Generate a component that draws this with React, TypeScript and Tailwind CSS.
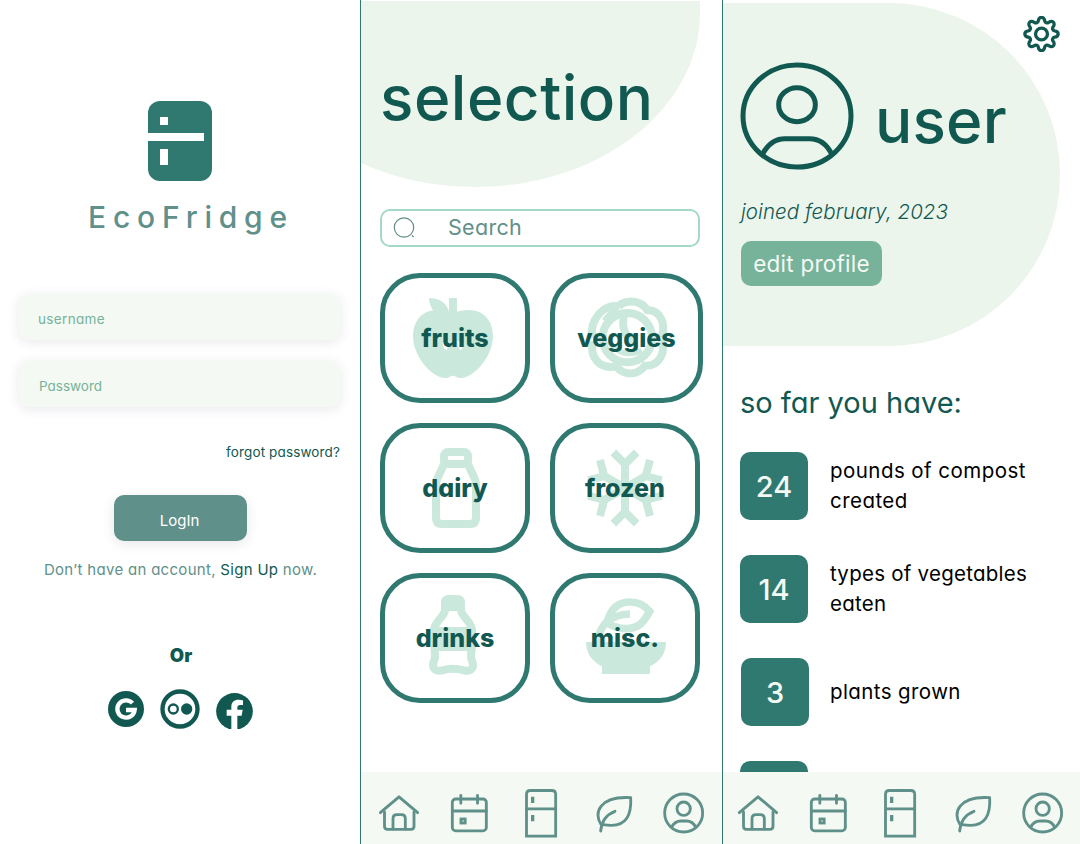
import type { ReactNode } from "react";

/* ---------- Bottom navigation ---------- */

function NavIcon({ box, className, children }: { box: string; className: string; children: ReactNode }) {
  return (
    <svg
      viewBox={box}
      className={`h-[72px] shrink-0 ${className}`}
      fill="none"
      stroke="#5f9089"
      strokeWidth={8.5}
      strokeLinecap="round"
      strokeLinejoin="round"
    >
      {children}
    </svg>
  );
}

function NavBar({ shifted = false }: { shifted?: boolean }) {
  return (
    <nav className="h-[72px] shrink-0 overflow-hidden bg-[#f4f9f3]">
      <div className={shifted ? "-ml-[3px] flex" : "flex"}>
        <NavIcon box="3 21 222 216" className="w-[74px]">
          <path d="M61 143 L117 95.500 L173 143" />
          <path d="M73.500 141 V184 Q73.500 193 82.500 193 H153 Q162 193 162 184 V141" />
          <path d="M99 192 V161 Q99 149 111 149 H124 Q136 149 136 161 V192" />
        </NavIcon>
        <NavIcon box="225 21 213 216" className="w-[71px]">
          <rect x="277" y="102" width="102" height="95.500" rx="10" />
          <path d="M277 138 H379 M302.500 91 V115 M352.500 91 V115" />
          <rect x="303" y="162" width="12.500" height="12" strokeLinejoin="miter" />
        </NavIcon>
        <NavIcon box="438 21 213 216" className="w-[71px]">
          <path d="M499.500 213.500 V88 Q499.500 76.500 511.500 76.500 H575 Q587 76.500 587 88 V213.500 Z" strokeLinejoin="miter" />
          <path d="M499.500 131.500 H587" />
          <path d="M518 95 V114 M518 150 V169" strokeWidth={10} strokeLinecap="butt" />
        </NavIcon>
        <NavIcon box="651 21 213 216" className="w-[71px]">
          <path d="M812 98 C815 150 798 181 755 181 C740 181 731 179 723 178 C700 145 718 92 812 98 Z" />
          <path d="M722 198 C725 168 740 148 765 139" />
        </NavIcon>
        <NavIcon box="864 21 216 216" className="w-[72px]">
          <circle cx="971" cy="144" r="57" />
          <circle cx="971" cy="131" r="20" />
          <path d="M935 187 C941 174 953 168 963 168 H980 C990 168 1001 174 1007 187" />
        </NavIcon>
      </div>
    </nav>
  );
}

/* ---------- Login screen ---------- */

function LoginScreen() {
  return (
    <section className="flex h-[844px] w-[360px] shrink-0 flex-col bg-white">
      <svg viewBox="0 0 64 80" className="mt-[101px] ml-[148px] h-20 w-16">
        <rect width="64" height="80" rx="12" fill="#2f7970" />
        <path d="M12 16h8v8h-8zM0 32h56v8H0zM12 48h8v16h-8z" fill="#fff" />
      </svg>
      <h1 className="mt-4 ml-[88px] h-10 text-[30px] leading-10 font-medium tracking-[6.8px] text-[#5f9089]">EcoFridge</h1>

      <form className="mt-[57px] flex flex-col">
        <div className="ml-[19px] h-[46px] w-[321px] rounded-[10px] bg-[#f4f9f3] pt-[5px] pl-[19px] text-[13.5px] leading-[41px] tracking-[0.35px] text-[#76b39a] shadow-[0_2px_12px_rgba(80,60,90,0.12)]">
          username
        </div>
        <div className="mt-[21px] ml-[19px] h-[46px] w-[321px] rounded-[10px] bg-[#f4f9f3] pt-[5px] pl-5 text-[13.5px] leading-[41px] text-[#76b39a] shadow-[0_2px_12px_rgba(80,60,90,0.12)]">
          Password
        </div>
        <a className="mt-[35px] mr-5 h-5 self-end text-[13.5px] leading-5 tracking-[0.13px] text-[#115851]">forgot password?</a>
        <button
          type="button"
          className="mt-[33px] ml-[114px] h-[46px] w-[133px] rounded-[10px] bg-[#5f9089] pt-[5px] pr-[2px] text-[15px] leading-[41px] text-white shadow-[0_3px_12px_rgba(80,60,90,0.13)]"
        >
          LogIn
        </button>
      </form>

      <p className="mt-[19px] h-5 pl-px text-center text-[15px] leading-5 tracking-[0.3px] whitespace-nowrap text-[#5f9089]">
        Don’t have an account, <span className="text-[#115851]">Sign Up</span> now.
      </p>
      <p className="mt-[65px] h-5 pl-[2px] text-center text-[18.5px] leading-5 font-black text-[#115851]">Or</p>

      <div className="mt-[24px] flex">
        <svg viewBox="54 627 108 120" className="ml-[108px] h-10 w-9">
          <circle cx="108" cy="687" r="54" fill="#115851" />
          <path d="M127.500 669.500 A26 26 0 1 0 134 690 H108" fill="none" stroke="#fff" strokeWidth="13" />
        </svg>
        <svg viewBox="210 627 120 120" className="ml-4 h-10 w-10">
          <circle cx="270" cy="687" r="52.500" fill="none" stroke="#115851" strokeWidth="13" />
          <circle cx="250" cy="687" r="13.500" fill="none" stroke="#115851" strokeWidth="7" />
          <circle cx="290" cy="687" r="17" fill="#115851" />
        </svg>
        <svg viewBox="378 627 111 120" className="ml-4 h-10 w-[37px]">
          <circle cx="433.500" cy="694" r="55" fill="#115851" />
          <path
            d="M424 750 V707 H410 V689 H424 V680 C424 666 433 659 445 659 C451 659 455 660 459 661 V675 H451 C444 675 442 679 442 684 V689 H458 L455 707 H442 V750 Z"
            fill="#fff"
          />
        </svg>
      </div>
    </section>
  );
}

/* ---------- Selection screen ---------- */

const tileArt: Record<string, ReactNode> = {
  fruits: (
    <>
      <path
        d="M219 121 C235 113 250 111 267 111 C312 111 339 145 339 190 C339 250 282 315 243 315 C230 315 226 308 219 308 C212 308 208 315 195 315 C156 315 99 250 99 190 C99 145 126 111 171 111 C188 111 203 113 219 121 Z"
        fill="#cbe8dc"
      />
      <path d="M207 75 H231 V125 H207 Z" fill="#cbe8dc" />
      <path d="M147 75 C180 75 203 92 207 118 L164 118 C152 104 148 92 147 75 Z" fill="#cbe8dc" />
      <path d="M188 208 Q189 227 199 232 Q206 222 205 204 Z M233 204 Q234 224 242 232 Q252 222 252 208 Z" fill="#fff" />
    </>
  ),
  veggies: (
    <g fill="none" stroke="#cbe8dc" strokeWidth="24">
      <circle cx="232" cy="194" r="74" />
      <path d="M208 100 C160 92 119 140 126 194" />
      <path d="M204 101 C225 80 270 78 292 111 C330 112 350 150 334 194" />
      <path d="M128 205 C118 255 150 290 198 280 C225 310 262 308 285 278 C328 280 352 235 330 202" />
      <path d="M222 125 C214 165 225 195 258 208" />
      <path d="M176 204 C200 245 245 250 275 232" strokeWidth="16" />
      <path d="M205 110 C190 118 176 130 166 145" />
    </g>
  ),
  dairy: (
    <g fill="none" stroke="#cbe8dc" strokeWidth="24">
      <rect x="192" y="87" width="72" height="36" rx="12" />
      <path d="M194 120 L174 162 Q168 174 168 186 V285 Q168 303 186 303 H270 Q288 303 288 285 V186 Q288 174 282 162 L262 120" />
    </g>
  ),
  frozen: (
    <g fill="none" stroke="#cbe8dc" strokeWidth="24" transform="translate(225 195)">
      {[0, 60, 120, 180, 240, 300].map((angle) => (
        <path key={angle} d="M0 0 V-72 M-35 -107 L0 -72 L35 -107" transform={`rotate(${angle})`} />
      ))}
    </g>
  ),
  drinks: (
    <>
      <path d="M183 114 V90 Q183 66 207 66 H231 Q255 66 255 90 V114 Z" fill="#cbe8dc" />
      <path d="M155 162 H287 V234 H155 Z" fill="#cbe8dc" />
      <path
        d="M195 112 C190 136 162 146 162 174 L165 252 C165 260 159 266 159 276 C159 292 174 295 186 292 C208 286 230 286 252 292 C264 295 279 292 279 276 C279 266 273 260 273 252 L276 174 C276 146 248 136 243 112"
        fill="none"
        stroke="#cbe8dc"
        strokeWidth="24"
      />
    </>
  ),
  misc: (
    <>
      <path d="M108 207 H348 C348 242 329 267 300 280 V303 H156 V280 C128 267 108 242 108 207 Z" fill="#cbe8dc" />
      <g fill="none" stroke="#cbe8dc" strokeWidth="23">
        <path d="M172 146 C184 100 212 87 240 87 C266 87 285 98 299 115 C280 150 264 167 228 167 C202 167 185 160 170 148 Z" />
        <path d="M240 123 C195 124 150 145 142 208" />
      </g>
    </>
  ),
};

function Tile({ art, label, wide = false }: { art: string; label: string; wide?: boolean }) {
  return (
    <button
      type="button"
      className={`grid h-[130px] grid-cols-1 grid-rows-1 place-items-center overflow-hidden rounded-[40px] border-[5px] border-[#2f7970] bg-white ${wide ? "w-[153px]" : "w-[150px]"}`}
    >
      <svg viewBox="15 15 420 360" className="col-start-1 row-start-1 h-[120px] w-[140px] justify-self-start">
        {tileArt[art]}
      </svg>
      <span className="col-start-1 row-start-1 text-[25px] leading-7 font-extrabold text-[#115851]">{label}</span>
    </button>
  );
}

function SelectionScreen() {
  return (
    <section className="flex h-[844px] w-[362px] shrink-0 flex-col overflow-hidden border-l border-[#2f7970] bg-white">
      <div className="h-[772px] shrink-0">
        <header className="mt-px -ml-[111px] h-[186px] w-[450px] rounded-b-[225px_174px] bg-[#ebf5eb] pt-[67px] pl-[130px]">
          <h2 className="text-[62px] leading-[60px] font-medium tracking-[0.5px] text-[#115851]">selection</h2>
        </header>
        <div className="mt-[22px] ml-[19px] flex h-[38px] w-80 items-center rounded-[10px] border-2 border-[#a6d8c6] pl-[11px]">
          <svg viewBox="0 0 22 22" className="h-[22px] w-[22px]">
            <circle cx="11" cy="10.500" r="9.700" fill="none" stroke="#5f9089" strokeWidth="1.200" />
            <path d="M19 18.500 L20.600 20" stroke="#5f9089" strokeWidth="1.400" />
          </svg>
          <span className="ml-[33px] pb-[2px] text-[21.5px] leading-[30px] tracking-[0.3px] text-[#5f9089]">Search</span>
        </div>
        <div className="mt-[26px] ml-[19px] grid grid-cols-[150px_153px] gap-5">
          <Tile art="fruits" label="fruits" />
          <Tile art="veggies" label="veggies" wide />
          <Tile art="dairy" label="dairy" />
          <Tile art="frozen" label="frozen" />
          <Tile art="drinks" label="drinks" />
          <Tile art="misc" label="misc." />
        </div>
      </div>
      <NavBar />
    </section>
  );
}

/* ---------- Profile screen ---------- */

function polar(radius: number, degrees: number) {
  const t = (degrees * Math.PI) / 180;
  return `${(56 + radius * Math.cos(t)).toFixed(2)} ${(54 + radius * Math.sin(t)).toFixed(2)}`;
}

/* Eight rounded teeth joined by small hollows. */
const gearPath =
  `M${polar(41, -13.5)} ` +
  Array.from({ length: 8 }, (_, i) => `A9.600 11.500 ${i * 45 + 90} 0 1 ${polar(41, i * 45 + 13.5)} A7.500 7.500 0 0 0 ${polar(41, i * 45 + 31.5)}`).join(" ") +
  " Z";

function Stat({ value, children, nudge = "" }: { value: string; children: ReactNode; nudge?: string }) {
  return (
    <li className="flex h-[68px] items-center">
      <span className={`flex h-[68px] w-[68px] shrink-0 items-center justify-center rounded-[10px] bg-[#2f7970] text-[29px] leading-none font-medium text-[#f4f9f3] ${nudge}`}>
        {value}
      </span>
      <span className="ml-[22px] text-[20.5px] leading-[30px] text-black">{children}</span>
    </li>
  );
}

function ProfileScreen() {
  return (
    <section className="relative flex h-[844px] w-[358px] shrink-0 flex-col overflow-hidden border-l border-[#2f7970] bg-white">
      <div className="flex h-[772px] shrink-0 flex-col overflow-hidden">
        <header className="mt-[3px] flex h-[343px] w-[337px] shrink-0 flex-col items-start rounded-r-[171px] bg-[#ebf5eb] pt-[59px] pl-[17px]">
          <div className="flex h-[108px]">
            <svg viewBox="60 186 342 324" className="h-[108px] w-[114px]" fill="none" stroke="#115851" strokeWidth="15">
              <ellipse cx="231" cy="348" rx="162" ry="153" />
              <ellipse cx="231" cy="314" rx="55" ry="51" />
              <path d="M127 464 C142 434 166 416 195 416 H268 C298 416 322 434 336 464" />
            </svg>
            <h2 className="mt-[29px] ml-[21px] text-[62px] leading-[60px] font-medium tracking-[0.2px] text-[#115851]">user</h2>
          </div>
          <p className="mt-[27px] pl-px text-[20.5px] leading-[30px] font-light tracking-[0.05px] text-[#115851] italic">joined february, 2023</p>
          <button
            type="button"
            className="mt-[14px] ml-px h-[45px] w-[141px] rounded-[10px] bg-[#76b39a] text-[22.5px] leading-[45px] tracking-[0.25px] text-[#f4f9f3]"
          >
            edit profile
          </button>
        </header>
        <h3 className="mt-[42px] ml-[17px] text-[29px] leading-[30px] text-[#115851]">so far you have:</h3>
        <ul className="mt-[34px] ml-[17px] flex flex-col gap-[35px]">
          <Stat value="24">
            <span className="tracking-[0.45px]">
              pounds of compost
              <br />
              created
            </span>
          </Stat>
          <Stat value="14">
            <span className="tracking-[0.25px]">
              types of vegetables
              <br />
              eaten
            </span>
          </Stat>
          <Stat value="3" nudge="ml-px -mr-px">
            <span className="tracking-[0.4px]">plants grown</span>
          </Stat>
          <li className="h-[68px] w-[68px] rounded-[10px] bg-[#2f7970]" />
        </ul>
      </div>
      <NavBar shifted />
      <svg viewBox="0 0 112 108" className="absolute top-4 right-[20px] h-9 w-[37px]" fill="none" stroke="#115851" strokeWidth="10">
        <path d={gearPath} strokeLinejoin="round" />
        <circle cx="56" cy="54" r="18" />
      </svg>
    </section>
  );
}

export default function App() {
  return (
    <main className="flex h-[844px] w-[1080px] overflow-hidden bg-white font-[Inter,sans-serif] [font-feature-settings:'cv11']">
      <LoginScreen />
      <SelectionScreen />
      <ProfileScreen />
    </main>
  );
}
